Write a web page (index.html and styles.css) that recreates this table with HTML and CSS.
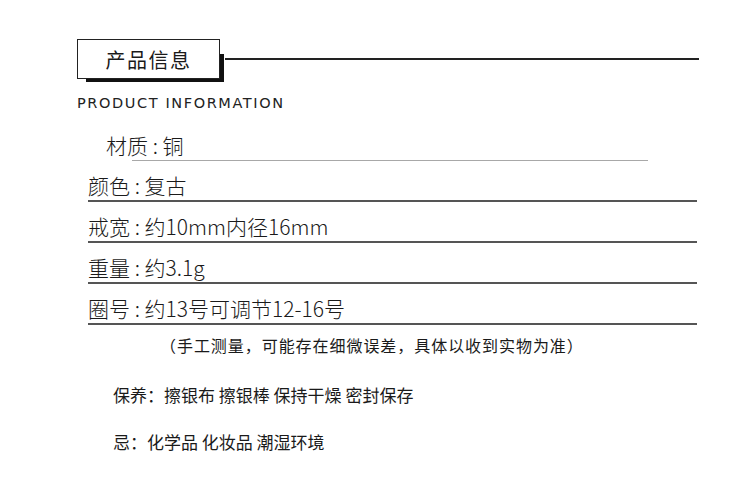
FILE: index.html
```html
<!DOCTYPE html>
<html lang="zh-CN">
<head>
  <meta charset="UTF-8" />
  <meta name="viewport" content="width=device-width, initial-scale=1.0"/>
  <title>产品信息</title>
  <link rel="stylesheet" href="styles.css">
</head>
<body>

  <div class="page">
    <div class="head">
      <div class="title-box">产品信息</div>
      <div class="head-line"></div>
    </div>
    <div class="en-title">PRODUCT INFORMATION</div>

    <div class="specs">
      <div class="spec spec-first">
        <div class="spec-text">材质 : 铜</div>
        <div class="spec-line"></div>
      </div>
      <div class="spec">颜色 : 复古</div>
      <div class="spec">戒宽 : 约10mm内径16mm</div>
      <div class="spec">重量 : 约3.1g</div>
      <div class="spec">圈号 : 约13号可调节12-16号</div>
    </div>

    <div class="note">（手工测量，可能存在细微误差，具体以收到实物为准）</div>
    <div class="care">保养：擦银布 擦银棒 保持干燥 密封保存</div>
    <div class="care care-avoid">忌：化学品 化妆品 潮湿环境</div>
  </div>

</body>
</html>
```

FILE: styles.css
```css
body {
  margin: 0;
  background: #fff;
  color: #1a1a1a;
  font-family: "Noto Sans CJK SC", "Noto Sans", sans-serif;
}

.page {
  width: 750px;
  height: 500px;
  box-sizing: border-box;
  padding: 39px 0 0 77px;
}

.head {
  display: flex;
  align-items: center;
}

.title-box {
  position: relative;
  width: 143px;
  height: 40px;
  box-sizing: border-box;
  border: 1px solid #222;
  background: #fff;
  display: flex;
  align-items: center;
  justify-content: center;
  font-size: 20px;
  letter-spacing: 1.5px;
}

/* offset dark shadow behind the box */
.title-box::after {
  content: "";
  position: absolute;
  left: 8px;
  top: 14px;
  right: -5px;
  bottom: -4px;
  background: #111;
  z-index: -1;
}

.head-line {
  width: 474px;
  height: 2px;
  margin-left: 5px;
  background: #222;
}

.en-title {
  margin-top: 14px;
  font-family: "DejaVu Sans", sans-serif;
  font-size: 14.5px;
  line-height: 20px;
  letter-spacing: 1.6px;
  color: #222;
}

.specs {
  margin-top: 17px;
  margin-left: 11px;
  width: 609px;
}

.spec {
  padding-top: 10px;
  font-size: 21px;
  font-weight: 300;
  line-height: 29px;
  border-bottom: 2px solid #555;
}

.spec-first {
  padding-top: 0;
  border-bottom: none;
}

.spec-first .spec-text {
  margin-left: 18px;
  line-height: 30px;
}

.spec-line {
  margin-left: 44px;
  width: 516px;
  height: 1px;
  background: #a8a8a8;
}

.note {
  margin-top: 8px;
  margin-left: 83px;
  font-size: 16px;
  line-height: 24px;
  letter-spacing: 0.95px;
}

.care {
  margin-top: 26px;
  margin-left: 36px;
  font-size: 17px;
  line-height: 24px;
}

.care-avoid {
  margin-top: 23px;
}
```
